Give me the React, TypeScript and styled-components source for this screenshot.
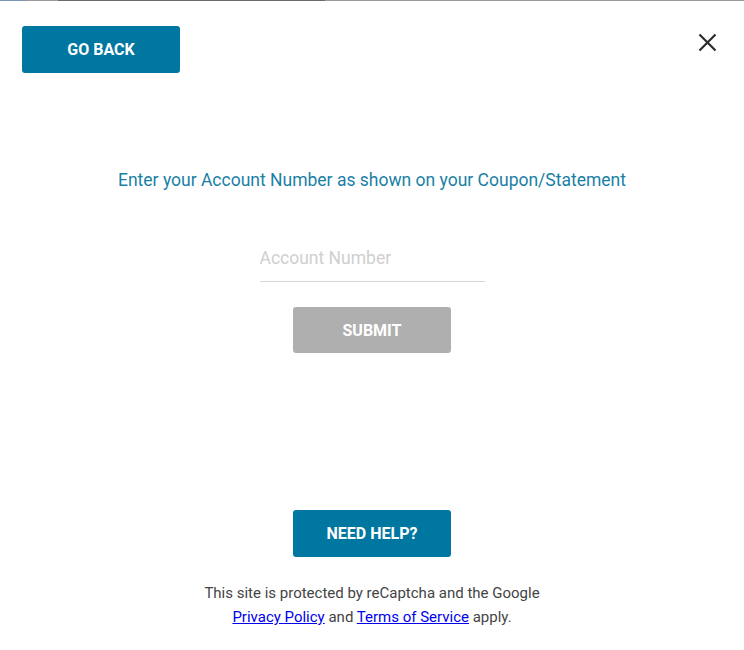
import React from "react";
import styled, { createGlobalStyle } from "styled-components";

const Global = createGlobalStyle`
  html, body { margin: 0; padding: 0; background: #ffffff; }
  body { font-family: Roboto, "Liberation Sans", Arial, sans-serif; }
  * { box-sizing: border-box; }
`;

const Page = styled.div`
  width: 744px;
  height: 650px;
  display: flex;
  flex-direction: column;
  background: #fff;
  overflow: hidden;
`;

const TopLine = styled.div`
  height: 1px;
  flex: none;
  background: linear-gradient(
    to right,
    #7a93b8 0px,
    #7a93b8 26px,
    #9a9a9a 26px,
    #9a9a9a 58px,
    #6e6a66 58px,
    #6e6a66 325px,
    #9a9a9a 325px
  );
`;

const Header = styled.div`
  display: flex;
  justify-content: space-between;
  align-items: flex-start;
  padding: 25px 27px 0 22px;
`;

const Button = styled.button<{ $variant?: "primary" | "disabled" }>`
  width: 158px;
  height: ${(p) => (p.$variant === "disabled" ? "46px" : "47px")};
  border: none;
  border-radius: 3px;
  background: ${(p) => (p.$variant === "disabled" ? "#afafaf" : "#0077a0")};
  color: #ffffff;
  font-family: Roboto, "Liberation Sans", Arial, sans-serif;
  font-weight: 700;
  font-size: 16px;
  letter-spacing: 0;
  display: flex;
  align-items: center;
  justify-content: center;
  cursor: ${(p) => (p.$variant === "disabled" ? "default" : "pointer")};
  padding: 0;
`;

const CloseButton = styled.button`
  width: 20px;
  height: 20px;
  margin-top: 6px;
  border: none;
  background: transparent;
  padding: 0;
  display: flex;
  align-items: center;
  justify-content: center;
  cursor: pointer;
`;

const Main = styled.div`
  display: flex;
  flex-direction: column;
  align-items: center;
`;

const Heading = styled.h2`
  margin: 95px 0 0 0;
  font-family: Roboto, "Liberation Sans", Arial, sans-serif;
  font-weight: 400;
  font-size: 17.5px;
  line-height: 24px;
  color: #1a7fa6;
  text-align: center;
`;

const Input = styled.input`
  margin-top: 48px;
  width: 225px;
  height: 42px;
  border: none;
  border-bottom: 1px solid #d6d6d6;
  outline: none;
  padding: 0 0 6px 0;
  font-family: Roboto, "Liberation Sans", Arial, sans-serif;
  font-size: 17.5px;
  color: #333;
  background: transparent;
  &::placeholder {
    color: #cfcfcf;
  }
`;

const SubmitWrap = styled.div`
  margin-top: 25px;
`;

const HelpWrap = styled.div`
  margin-top: 157px;
`;

const Footer = styled.p`
  margin: 24px 0 0 0;
  font-family: Roboto, "Liberation Sans", Arial, sans-serif;
  font-size: 15px;
  line-height: 24px;
  color: #444444;
  text-align: center;
`;

const Link = styled.a`
  color: #0000ee;
  text-decoration: underline;
`;

export default function App() {
  return (
    <Page>
      <Global />
      <TopLine />
      <Header>
        <Button $variant="primary">GO BACK</Button>
        <CloseButton aria-label="Close">
          <svg width="19" height="19" viewBox="0 0 19 19">
            <path d="M1.5 1.5 L17.5 17.5 M17.5 1.5 L1.5 17.5" stroke="#2b2b2b" strokeWidth="2.2" fill="none" />
          </svg>
        </CloseButton>
      </Header>
      <Main>
        <Heading>Enter your Account Number as shown on your Coupon/Statement</Heading>
        <Input placeholder="Account Number" />
        <SubmitWrap>
          <Button $variant="disabled">SUBMIT</Button>
        </SubmitWrap>
        <HelpWrap>
          <Button $variant="primary">NEED HELP?</Button>
        </HelpWrap>
        <Footer>
          This site is protected by reCaptcha and the Google
          <br />
          <Link href="#">Privacy Policy</Link> and <Link href="#">Terms of Service</Link> apply.
        </Footer>
      </Main>
    </Page>
  );
}
